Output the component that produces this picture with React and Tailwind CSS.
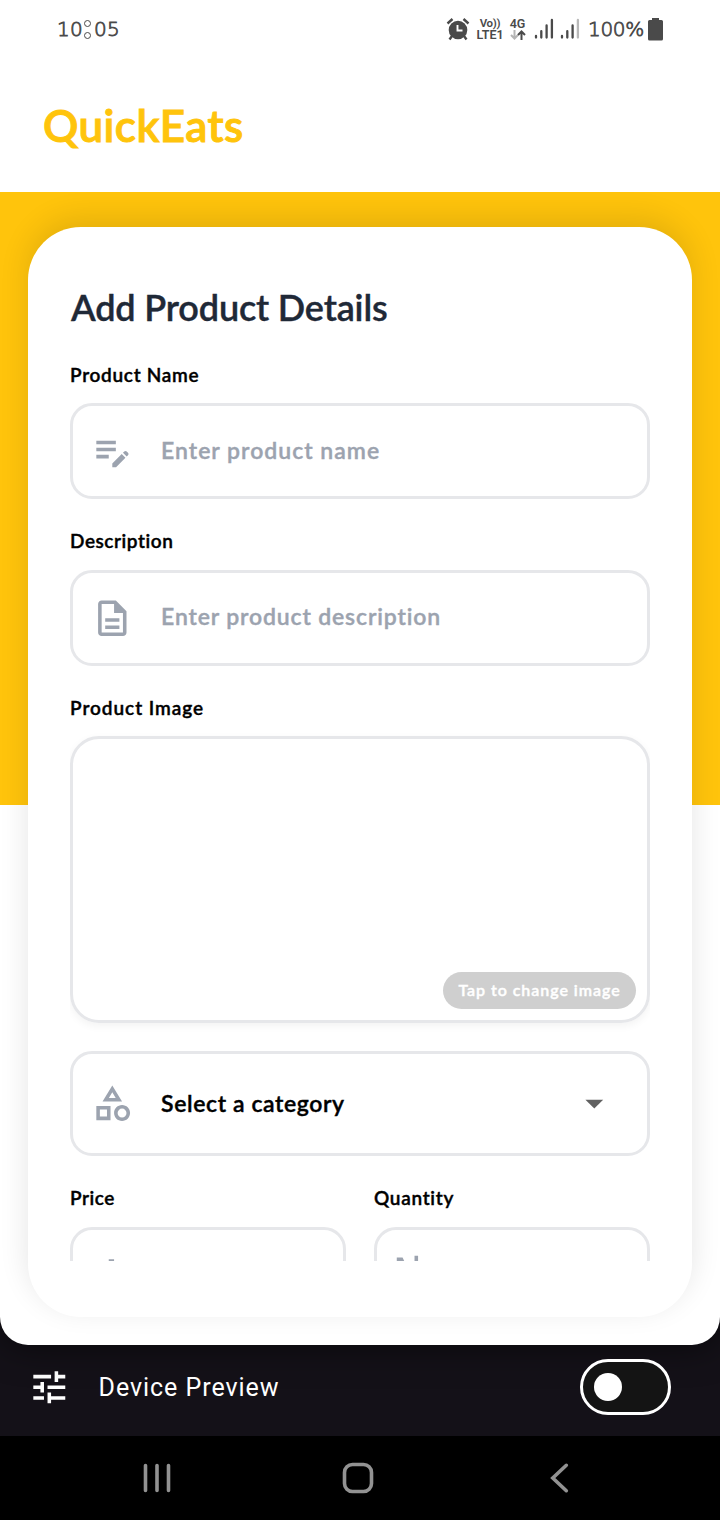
import {
  MdArrowDropDown,
  MdAttachMoney,
  MdEditNote,
  MdOutlineCategory,
  MdOutlineDescription,
  MdOutlineProductionQuantityLimits,
  MdTune,
} from "react-icons/md";

function AlarmIcon() {
  return (
    <svg width="24" height="24" viewBox="0 0 24 24" fill="none">
      <circle cx="12" cy="13" r="9.300" fill="#4a4a4a" />
      <path d="M6 19 3.500 22.500M18 19l2.500 3.500M1.500 6.500 6.500 2M22.500 6.500 17.500 2" stroke="#4a4a4a" strokeWidth="2.400" />
      <path d="M11.500 8v5.500h5" stroke="#fff" strokeWidth="1.900" />
    </svg>
  );
}

function Signal({ last }) {
  return (
    <svg width="20" height="22" viewBox="0 0 20 22" strokeWidth="2.300" strokeLinecap="round" stroke="#4a4a4a">
      <path d="M2 18v1.500M7.300 13.200v6.300M12.600 7.500v12" />
      <path d="M17.900 2v17.500" stroke={last} />
    </svg>
  );
}

function StatusBar() {
  return (
    <div className="flex h-[58px] shrink-0 items-center pl-[57px] pr-[57px] font-['DejaVu_Sans',sans-serif] text-[#4a4a4a]">
      <div className="flex text-[20px] font-extralight tracking-[0.300px] [-webkit-text-stroke:0.800px_#4a4a4a]">
        <span>10</span>
        <span className="relative w-[11px] text-transparent [-webkit-text-stroke:0px]">
          :
          <span className="absolute left-[1px] top-[6px] size-[7px] rounded-full border border-[#4a4a4a]" />
          <span className="absolute left-[1px] top-[18px] size-[7px] rounded-full border border-[#4a4a4a]" />
        </span>
        <span>05</span>
      </div>
      <div className="ml-auto flex items-center">
        <AlarmIcon />
        <div className="ml-[6px] w-[28px] text-center font-['Roboto',sans-serif] text-[12.500px] leading-[11.500px] font-semibold">
          <div className="text-[11.500px] tracking-[-0.300px]">Vo))</div>
          <div>LTE1</div>
        </div>
        <div className="ml-[5px] flex w-[17px] flex-col items-center font-['Roboto',sans-serif] text-[12.500px] leading-[12px] font-semibold">
          <div>4G</div>
          <svg width="16" height="10" viewBox="0 0 16 10" fill="none" strokeWidth="2">
            <path d="M4.500 0v8.500M1 5l3.500 3.500L8 5" stroke="#b5b5b5" />
            <path d="M11.500 10V1.500M8 5l3.500-3.500L15 5" stroke="#4a4a4a" />
          </svg>
        </div>
        <div className="ml-[8px] flex gap-[6px]">
          <Signal last="#4a4a4a" />
          <Signal last="#b9b9b9" />
        </div>
        <div className="ml-[8px] w-[60px] text-[20px] font-extralight tracking-[-0.300px] whitespace-nowrap [-webkit-text-stroke:0.800px_#4a4a4a]">100%</div>
        <svg width="15" height="23" viewBox="0 0 15 23" fill="#4a4a4a">
          <path d="M4 0h7v2h2.500a1.500 1.500 0 0 1 1.500 1.500v17.500a1.500 1.500 0 0 1-1.500 1.500h-12A1.500 1.500 0 0 1 0 21V3.500A1.500 1.500 0 0 1 1.500 2H4z" />
        </svg>
      </div>
    </div>
  );
}

function Label({ className = "tracking-[0.700px]", children }) {
  return <div className={`h-7 text-[19px] leading-7 font-semibold text-black ${className}`}>{children}</div>;
}

function Field({ icon: Icon, className, children }) {
  return (
    <div className={`flex items-center rounded-[22px] border-3 border-[#e6e7ea] pl-[17.500px] ${className}`}>
      <Icon size={42.600} className="shrink-0 text-[#9ca3af]" />
      {children}
    </div>
  );
}

function ProductForm() {
  return (
    <div className="h-[1090px] rounded-[53px] bg-white px-[42px] pt-[55px] shadow-[0_-9px_30px_rgba(0,0,0,0.110)] [-webkit-text-stroke-width:0.400px]">
      <div className="h-[979px] overflow-hidden">
        <h1 className="h-[51px] pl-[1px] text-[36px] leading-[50px] font-semibold tracking-[-0.150px] text-[#1f2937]">Add Product Details</h1>
        <div className="mt-7">
          <Label>Product Name</Label>
        </div>
        <Field icon={MdEditNote} className="mt-[14px] h-[96px]">
          <span className="ml-[28px] pb-[2px] text-[23px] font-semibold tracking-[1px] text-[#9ca3af]">Enter product name</span>
        </Field>
        <div className="mt-7">
          <Label className="tracking-[0.550px]">Description</Label>
        </div>
        <Field icon={MdOutlineDescription} className="mt-[15px] h-[96px]">
          <span className="ml-[28px] pb-[3px] text-[23px] font-semibold tracking-[0.850px] text-[#9ca3af]">Enter product description</span>
        </Field>
        <div className="mt-[28px]">
          <Label className="tracking-[0.950px]">Product Image</Label>
        </div>
        <div className="mt-[14px] flex h-[287px] items-end justify-end rounded-[29px] border-3 border-[#e6e7ea] p-[11px] shadow-[0_3px_8px_rgba(0,0,0,0.050)]">
          <div className="flex h-[37px] w-[193px] items-center justify-center rounded-full bg-[#cfcfcf] pb-[2px] text-[16px] font-semibold tracking-[0.950px] text-white">Tap to change image</div>
        </div>
        <Field icon={MdOutlineCategory} className="mt-7 h-[105px]">
          <span className="ml-[28px] text-[23px] font-semibold tracking-[0.600px] text-black">Select a category</span>
          <MdArrowDropDown size={42.600} className="mr-[31px] ml-auto text-[#616161]" />
        </Field>
        <div className="mt-7 grid grid-cols-2 gap-7">
          <div>
            <Label className="tracking-[0.550px]">Price</Label>
            <Field icon={MdAttachMoney} className="mt-[15px] h-[96px]" />
          </div>
          <div>
            <Label>Quantity</Label>
            <Field icon={MdOutlineProductionQuantityLimits} className="mt-[15px] h-[96px]" />
          </div>
        </div>
      </div>
    </div>
  );
}

export default function App() {
  return (
    <div className="flex h-[1520px] w-[720px] flex-col overflow-hidden bg-[#141118] font-['Lato',sans-serif]">
      <div className="relative z-10 flex h-[1345px] shrink-0 flex-col overflow-hidden rounded-b-[28px] bg-white shadow-[0_0_36px_rgba(0,0,0,0.600)]">
        <StatusBar />
        <div className="flex h-[134px] shrink-0 items-center pl-[43px] text-[44px] font-semibold tracking-[0.400px] text-[#ffc40c] [-webkit-text-stroke-width:1px]">QuickEats</div>
        <div className="h-[613px] shrink-0 bg-[#ffc40c] px-7 pt-[35px]">
          <ProductForm />
        </div>
      </div>
      <div className="flex h-[91px] shrink-0 items-center pr-[49px] pb-[7px] pl-[28px]">
        <MdTune size={42.600} className="text-white" />
        <span className="ml-[28px] pt-[2px] font-['Roboto',sans-serif] text-[25px] tracking-[0.950px] text-white">Device Preview</span>
        <div className="relative z-20 ml-auto flex h-[56px] w-[91px] items-center rounded-full border-[3px] border-white bg-[#141414] pl-[11px]">
          <div className="size-7 rounded-full bg-white" />
        </div>
      </div>
      <div className="relative z-0 h-[84px] bg-black">
        <svg width="720" height="84" viewBox="0 0 720 84" fill="none" stroke="#929292" strokeWidth="3.600" strokeLinecap="round">
          <path d="M145.500 29.500v25M157 29.500v25M168.500 29.500v25" />
          <rect x="344.500" y="28.500" width="27" height="27" rx="8" />
          <path d="M566.300 29.300 552.800 42l13.500 12.700" />
        </svg>
      </div>
    </div>
  );
}
